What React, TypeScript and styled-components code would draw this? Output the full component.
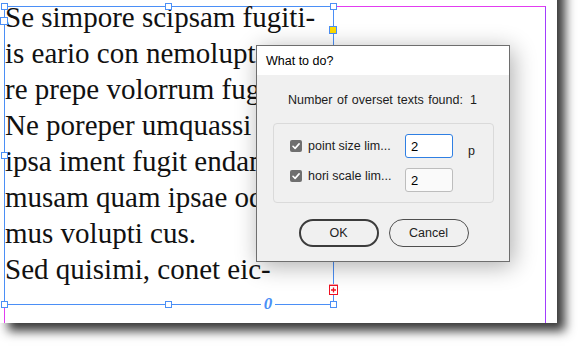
import styled, { createGlobalStyle } from "styled-components";

const BLUE = "#4b8ff6";
const UI_FONT = `"Liberation Sans", Arial, sans-serif`;

const GlobalStyle = createGlobalStyle`
  html, body {
    margin: 0;
    padding: 0;
    background: #fff;
  }
  body {
    overflow: hidden;
  }
`;

interface HandleProps {
  $x: number;
  $y: number;
  $size?: number;
  $fill?: string;
}

interface RowProps {
  $lift?: number;
}

interface FieldProps {
  $active?: boolean;
}

interface ButtonProps {
  $primary?: boolean;
}

const Workspace = styled.div`
  position: relative;
  width: 578px;
  height: 346px;
  overflow: hidden;
  background: #fff;
`;

const Page = styled.div`
  width: 557px;
  margin-top: -20px;
  padding-top: 20px;
  background: #fff;
  box-shadow: 8px 8px 10px rgba(0, 0, 0, 0.78);
`;

const Spread = styled.div`
  position: relative;
  height: 323px;
`;

const MarginGuides = styled.div`
  position: absolute;
  left: 4px;
  top: 6px;
  bottom: 0;
  width: 542px;
  box-sizing: border-box;
  border-top: 1px solid #e23cf0;
  border-left: 1px solid #e23cf0;
  border-right: 1px solid #a23cff;
`;

const TextFrame = styled.div`
  position: absolute;
  left: 4px;
  top: 6px;
  width: 330px;
  height: 299px;
  box-sizing: border-box;
  border: 1px solid ${BLUE};
`;

const Story = styled.div`
  margin-top: -8px;
  font-family: "Liberation Serif", "Times New Roman", serif;
  font-size: 29px;
  line-height: 36px;
  color: #111;
  white-space: nowrap;
`;

const Line = styled.div``;

const Handle = styled.div<HandleProps>`
  position: absolute;
  left: ${(p) => p.$x - Math.floor((p.$size ?? 7) / 2)}px;
  top: ${(p) => p.$y - Math.floor((p.$size ?? 7) / 2)}px;
  width: ${(p) => p.$size ?? 7}px;
  height: ${(p) => p.$size ?? 7}px;
  box-sizing: border-box;
  border: 1px solid ${BLUE};
  background: ${(p) => p.$fill ?? "#fff"};
`;

const AutoSizeMark = styled.div`
  position: absolute;
  left: 261px;
  top: 296px;
  width: 14px;
  height: 16px;
  background: #fff;
  color: ${BLUE};
  font-family: "Liberation Serif", serif;
  font-style: italic;
  font-weight: 700;
  font-size: 17px;
  line-height: 16px;
  text-align: center;
`;

const OverflowPort = styled.svg`
  position: absolute;
  left: 329px;
  top: 284px;
`;

const Dialog = styled.div`
  position: absolute;
  left: 256px;
  top: 45px;
  width: 254px;
  box-sizing: border-box;
  border: 1px solid #6e6e6e;
  background: #f0f0f0;
  box-shadow: 3px 4px 22px rgba(0, 0, 0, 0.32);
  font-family: ${UI_FONT};
  color: #1c1c1c;
`;

const TitleBar = styled.div`
  display: flex;
  align-items: center;
  height: 29px;
  padding-left: 9px;
  background: #fff;
  font-size: 12.5px;
  color: #000;
`;

const Body = styled.div`
  display: flex;
  flex-direction: column;
  padding: 17px 15px 14px 16px;
`;

const Info = styled.div`
  padding-left: 15px;
  font-size: 12.5px;
  line-height: 16px;
  word-spacing: 1px;
`;

const Count = styled.span`
  margin-left: 7px;
`;

const Group = styled.div`
  display: flex;
  flex-direction: column;
  row-gap: 10px;
  margin-top: 15px;
  padding: 10px 0 10px 16px;
  border: 1px solid #dadada;
  border-radius: 4px;
`;

const OptionRow = styled.div`
  display: flex;
  align-items: center;
  height: 24px;
`;

const CheckLabel = styled.label<RowProps>`
  display: flex;
  align-items: center;
  column-gap: 6px;
  width: 115px;
  margin-bottom: ${(p) => p.$lift ?? 0}px;
  font-size: 12.5px;
  line-height: 14px;
  white-space: nowrap;
`;

const Field = styled.div<FieldProps>`
  display: flex;
  align-items: center;
  width: 48px;
  height: 24px;
  box-sizing: border-box;
  padding-left: 5px;
  border: 1px solid ${(p) => (p.$active ? "#2f7fe3" : "#bdbdbd")};
  border-radius: 3px;
  background: ${(p) => (p.$active ? "#fff" : "#fafafa")};
  font-size: 13px;
  color: #000;
`;

const Unit = styled.span`
  align-self: flex-end;
  margin-left: 15px;
  font-size: 12.5px;
  line-height: 14px;
`;

const ButtonRow = styled.div`
  display: flex;
  justify-content: center;
  column-gap: 10px;
  margin-top: 16px;
`;

const Button = styled.div<ButtonProps>`
  display: flex;
  align-items: center;
  justify-content: center;
  width: 80px;
  height: 28px;
  box-sizing: border-box;
  border: ${(p) => (p.$primary ? "2px solid #3c3c3c" : "1px solid #4f4f4f")};
  border-radius: 14px;
  font-size: 12.5px;
  color: #222;
`;

function CheckBox() {
  return (
    <svg width="12" height="12" viewBox="0 0 12 12">
      <rect x="0" y="0" width="12" height="12" rx="2" fill="#6f6f6f" />
      <path
        d="M3 6.3 L5.1 8.4 L9.1 3.9"
        fill="none"
        stroke="#fff"
        strokeWidth="1.6"
        strokeLinecap="round"
        strokeLinejoin="round"
      />
    </svg>
  );
}

const lines = [
  "Se simpore scipsam fugiti-",
  "is eario con nemolupta",
  "re prepe volorrum fugit,",
  "Ne poreper umquassi tat",
  "ipsa iment fugit endam",
  "musam quam ipsae odit",
  "mus volupti cus.",
  "Sed quisimi, conet eic-",
];

const handles = [
  { x: 4, y: 6 },
  { x: 168, y: 6 },
  { x: 333, y: 6 },
  { x: 4, y: 155 },
  { x: 4, y: 304 },
  { x: 168, y: 304 },
  { x: 333, y: 304 },
];

export default function App() {
  return (
    <Workspace>
      <GlobalStyle />
      <Page>
        <Spread>
          <MarginGuides />
          <TextFrame>
            <Story>
              {lines.map((l) => (
                <Line key={l}>{l}</Line>
              ))}
            </Story>
          </TextFrame>
          {handles.map((h) => (
            <Handle key={`${h.x}-${h.y}`} $x={h.x} $y={h.y} />
          ))}
          <Handle $x={4} $y={21} $size={8} />
          <Handle $x={333} $y={30} $size={8} $fill="#ffdc00" />
          <AutoSizeMark>0</AutoSizeMark>
          <OverflowPort width="9" height="11" viewBox="0 0 9 11">
            <rect x="0" y="0" width="9" height="2" fill="#f7a3a8" />
            <rect x="0.5" y="1.5" width="8" height="9" fill="#fff" stroke="#ee1122" />
            <path d="M4.5 3.5 V8.5 M2 6 H7" stroke="#ee1122" strokeWidth="1.3" />
          </OverflowPort>
        </Spread>
      </Page>

      <Dialog>
        <TitleBar>What to do?</TitleBar>
        <Body>
          <Info>
            Number of overset texts found:<Count>1</Count>
          </Info>
          <Group>
            <OptionRow>
              <CheckLabel>
                <CheckBox />
                point size lim...
              </CheckLabel>
              <Field $active>2</Field>
              <Unit>p</Unit>
            </OptionRow>
            <OptionRow>
              <CheckLabel $lift={9}>
                <CheckBox />
                hori scale lim...
              </CheckLabel>
              <Field>2</Field>
            </OptionRow>
          </Group>
          <ButtonRow>
            <Button $primary>OK</Button>
            <Button>Cancel</Button>
          </ButtonRow>
        </Body>
      </Dialog>
    </Workspace>
  );
}
